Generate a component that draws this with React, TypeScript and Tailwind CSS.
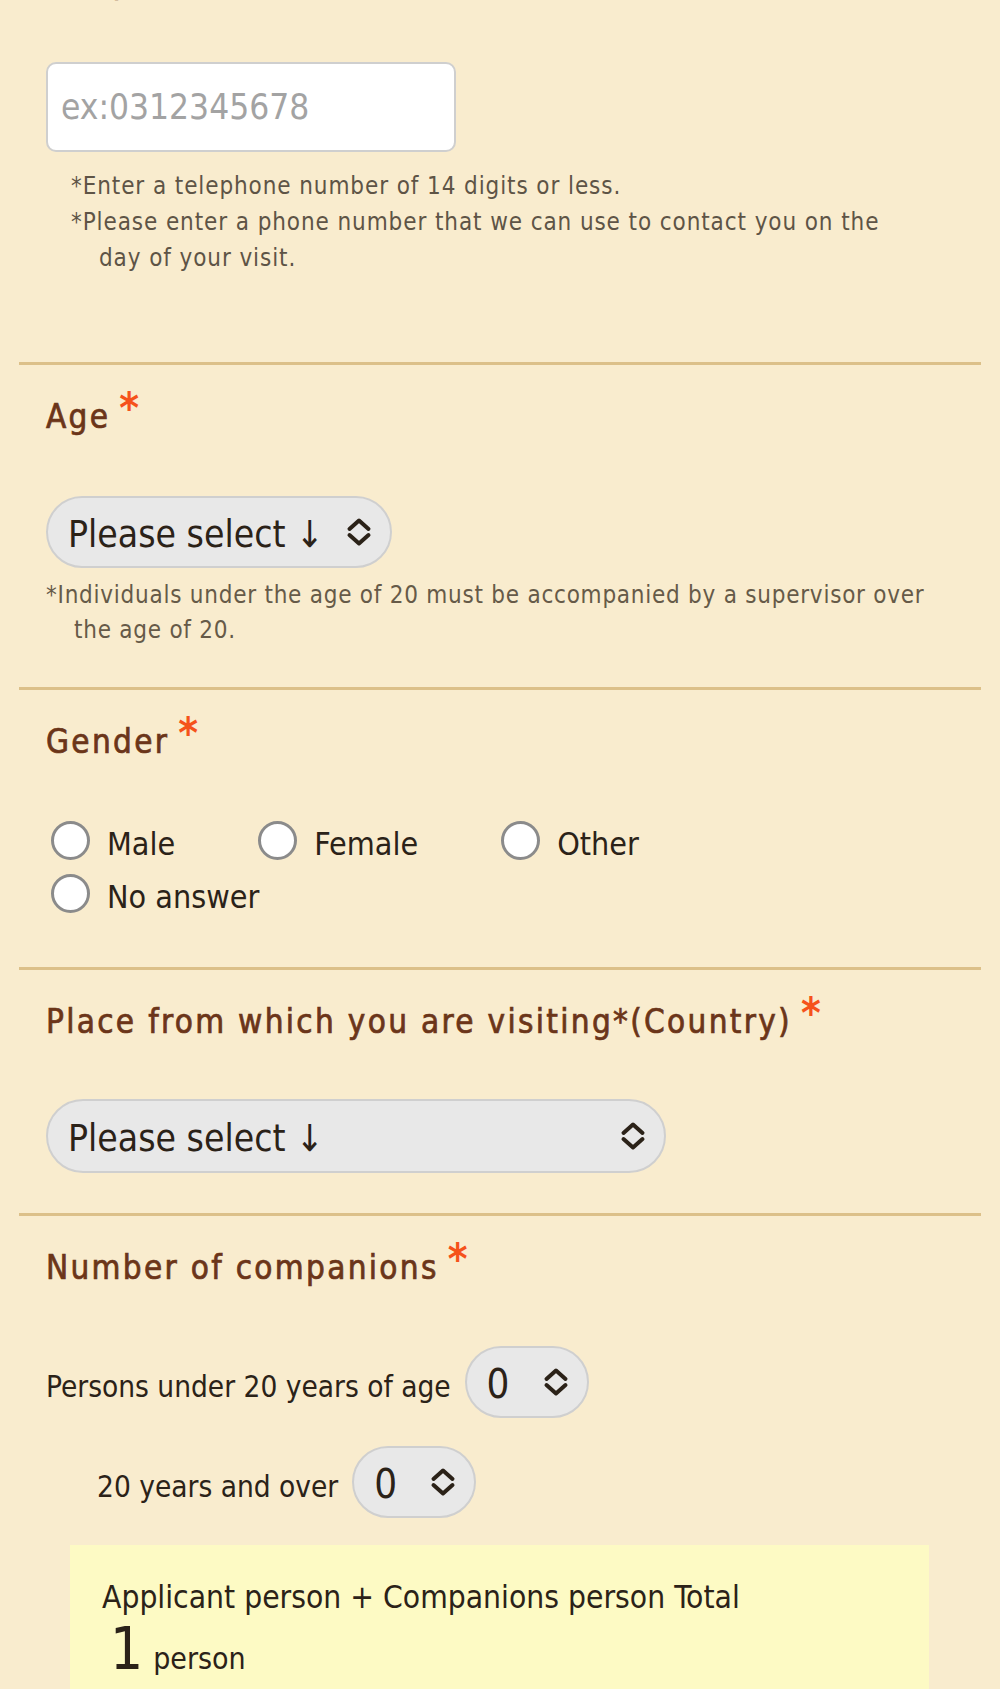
import React from "react";

function Chevrons() {
  return (
    <svg width="26" height="30" viewBox="0 0 26 30" fill="none" aria-hidden="true">
      <path d="M3.5 12 L13 3.5 L22.5 12" stroke="#2b2218" strokeWidth="4" strokeLinecap="round" strokeLinejoin="round" />
      <path d="M3.5 18 L13 26.5 L22.5 18" stroke="#2b2218" strokeWidth="4" strokeLinecap="round" strokeLinejoin="round" />
    </svg>
  );
}

function Heading({ children }: { children: React.ReactNode }) {
  return (
    <div className="whitespace-nowrap text-[33px] leading-[46px] tracking-[2.3px] text-[#6b3519] [-webkit-text-stroke:0.7px_#6b3519]">
      {children}
      <span className="relative top-[-5px] ml-[9px] text-[42px] font-bold leading-[0] tracking-normal text-[#f5521b] [-webkit-text-stroke:0px]">
        *
      </span>
    </div>
  );
}

function Select({ text, width, height = 72, size = "text-[37px]" }: { text: string; width: number; height?: number; size?: string }) {
  return (
    <div
      className="flex items-center justify-between rounded-full border-2 border-[#cfcfcf] bg-[#e8e8e8] pl-[20px] pr-[18px] text-[#2b2218]"
      style={{ width, height }}
    >
      <span className={`mt-[4px] whitespace-nowrap leading-[1] ${size}`}>{text}</span>
      <span className="flex">
        <Chevrons />
      </span>
    </div>
  );
}

function Radio({ label }: { label: string }) {
  return (
    <div className="flex items-center">
      <span className="mt-[-8px] box-border block h-[39px] w-[39px] rounded-full border-[3.5px] border-[#8b8b8b] bg-white" />
      <span className="ml-[17px] whitespace-nowrap text-[32px] leading-[53px] text-[#2b2218]">{label}</span>
    </div>
  );
}

export default function App() {
  return (
    <div className="h-[1689px] w-[1000px] overflow-hidden bg-[#f9ecce] font-['DejaVu_Sans_Condensed','DejaVu_Sans',sans-serif]">
      <div className="mx-[19px]">
        <section className="pb-[86px] pl-[27px]">
          <div className="mt-[-41px] h-[46px] whitespace-nowrap text-[33px] leading-[46px] tracking-[2.3px] text-[#6b3519] [-webkit-text-stroke:0.7px_#6b3519]">
            Telephone number
          </div>
          <input
            type="tel"
            readOnly
            placeholder="ex:0312345678"
            className="mt-[57px] block h-[90px] w-[410px] rounded-[10px] border-2 border-[#cfcfcf] bg-white pl-[13px] text-[35px] text-[#2b2218] outline-none placeholder:text-[#a3a3a3]"
          />
          <div className="ml-[25px] mt-[16px] whitespace-nowrap text-[24px] leading-[36px] tracking-[0.9px] text-[#5e5446]">
            <div className="pl-[28px] indent-[-28px]">*Enter a telephone number of 14 digits or less.</div>
            <div className="pl-[28px] indent-[-28px]">
              *Please enter a phone number that we can use to contact you on the
              <br />
              day of your visit.
            </div>
          </div>
        </section>

        <section className="border-t-[3px] border-[#dcc089] pb-[39px] pl-[27px] pt-[29px]">
          <Heading>Age</Heading>
          <div className="mt-[56px]">
            <Select text="Please select ↓" width={346} />
          </div>
          <div className="mt-[10px] whitespace-nowrap pl-[28px] indent-[-28px] text-[24px] leading-[35px] tracking-[0.75px] text-[#665a48]">
            *Individuals under the age of 20 must be accompanied by a supervisor over
            <br />
            the age of 20.
          </div>
        </section>

        <section className="border-t-[3px] border-[#dcc089] pb-[43px] pl-[27px] pt-[29px]">
          <Heading>Gender</Heading>
          <div className="mt-[53px] pl-[5px]">
            <div className="flex gap-x-[83px]">
              <Radio label="Male" />
              <Radio label="Female" />
              <Radio label="Other" />
            </div>
            <div className="flex">
              <Radio label="No answer" />
            </div>
          </div>
        </section>

        <section className="border-t-[3px] border-[#dcc089] pb-[40px] pl-[27px] pt-[29px]">
          <Heading>Place from which you are visiting*(Country)</Heading>
          <div className="mt-[54px]">
            <Select text="Please select ↓" width={620} height={74} />
          </div>
        </section>

        <section className="border-t-[3px] border-[#dcc089] pl-[27px] pt-[29px]">
          <Heading>Number of companions</Heading>
          <div className="mt-[55px] flex items-center gap-[14px]">
            <span className="mt-[12px] whitespace-nowrap text-[29.5px] leading-[1] text-[#2b2218]">Persons under 20 years of age</span>
            <Select text="0" width={124} size="text-[40px]" />
          </div>
          <div className="ml-[51px] mt-[28px] flex items-center gap-[14px]">
            <span className="mt-[12px] whitespace-nowrap text-[29.5px] leading-[1] text-[#2b2218]">20 years and over</span>
            <Select text="0" width={124} size="text-[40px]" />
          </div>
          <div className="ml-[24px] mt-[27px] h-[200px] w-[859px] bg-[#fdfac4] pl-[32px] pt-[29px] text-[#2b2218]">
            <div className="whitespace-nowrap text-[31.5px] leading-[46px]">Applicant person + Companions person Total</div>
            <div className="flex items-baseline pl-[8px]">
              <span className="text-[58px] leading-[1]">1</span>
              <span className="ml-[10px] text-[30px] leading-[1]">person</span>
            </div>
          </div>
        </section>
      </div>
    </div>
  );
}
